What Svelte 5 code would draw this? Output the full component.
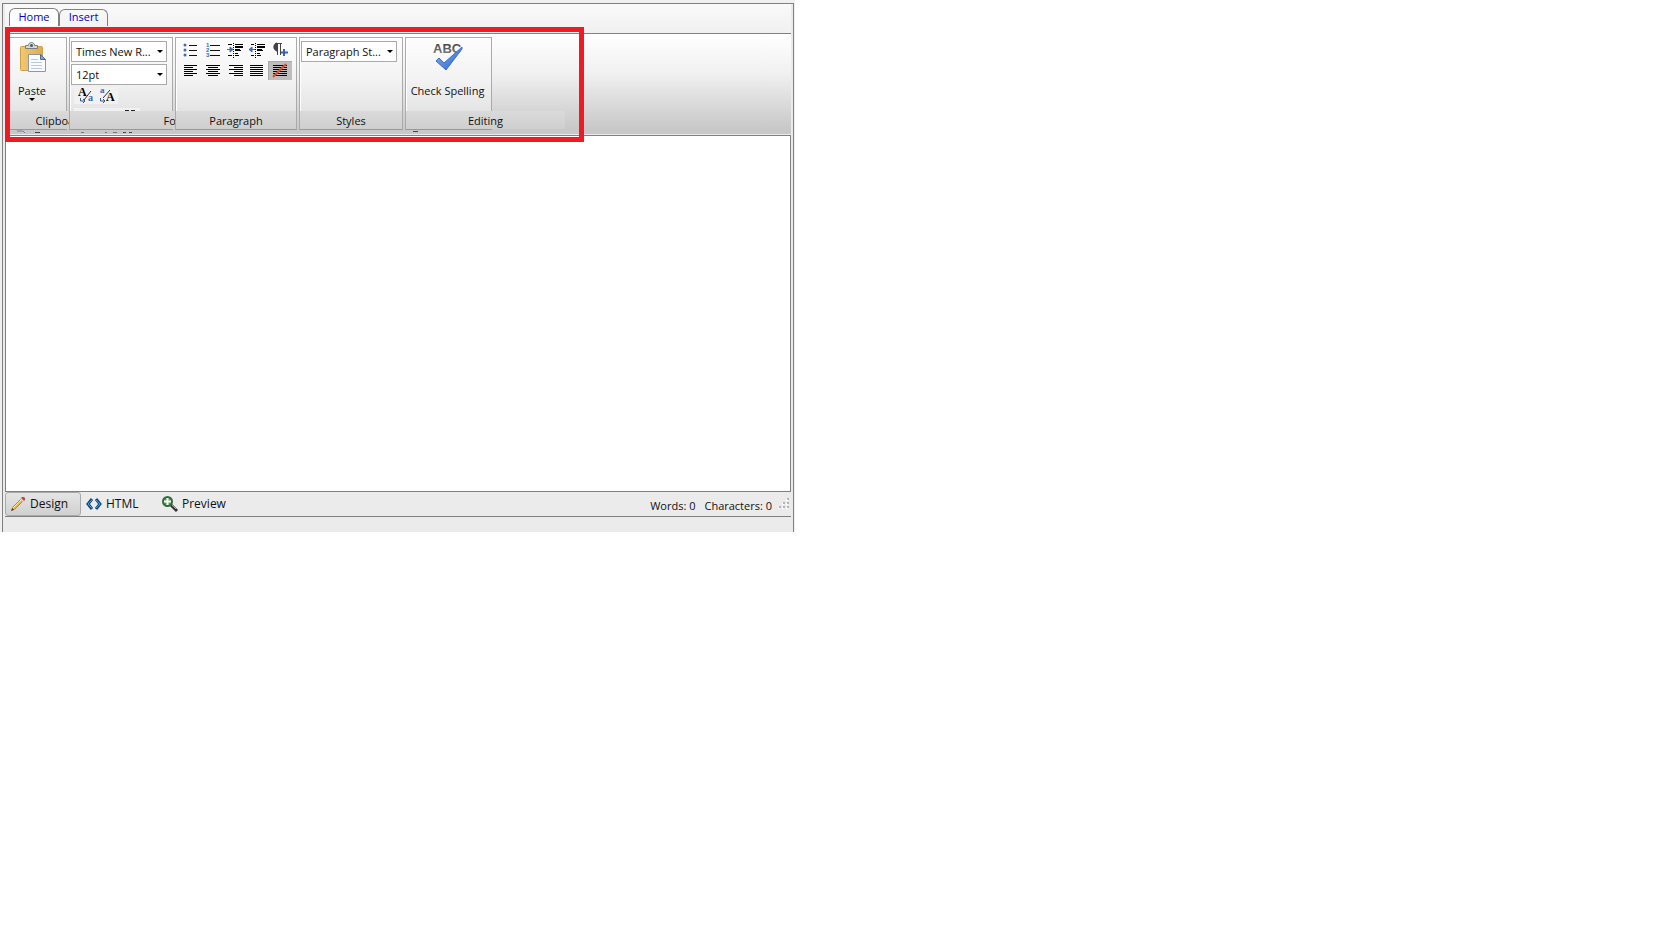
<script>
  let mode = $state('Design');
  let content = $state('');
  const words = $derived(content.trim() ? content.trim().split(/\s+/).length : 0);
  const aligns = [
    ['Align left', [[1, 13], [1, 9], [1, 13], [1, 9], [1, 13], [1, 9]]],
    ['Align center', [[1, 14], [3, 10], [1, 14], [3, 10], [1, 14], [3, 10]]],
    ['Align right', [[2, 14], [7, 9], [2, 14], [7, 9], [2, 14], [7, 9]]],
    ['Justify', [[1, 13], [1, 13], [1, 13], [1, 13], [1, 13], [1, 13]]],
  ];
</script>

<div class="frame">
  <main class="editor">
    <nav class="tabs">
      <a class="tab active" href="#home">Home</a>
      <a class="tab" href="#insert">Insert</a>
    </nav>

    <div class="ribbon">
      <section class="group clipboard">
        <div class="body">
          <button class="big paste">
            <svg width="28" height="32" viewBox="0 0 28 32">
              <defs><linearGradient id="board" x1="0" x2="1"><stop stop-color="#f3c870" /><stop offset="1" stop-color="#dfab4c" /></linearGradient></defs>
              <rect x="2.500" y="5.500" width="22" height="24" rx="1" fill="url(#board)" stroke="#cda04a" />
              <path d="M7.500 4.500h3c0-4 6-4 6 0h3v3h-12z" fill="#d5d8da" stroke="#777f84" />
              <circle cx="13.500" cy="4.500" r="1.500" fill="#555" />
              <path d="M10.500 13.500h12l5 5v12h-17z" fill="#f8fbff" stroke="#8798b5" />
              <path d="M22.500 13.500v5h5z" fill="#8fa2c0" stroke="#53698f" />
              <path d="M13 18.500h7M13 21.500h11M13 24.500h11M13 27.500h11" stroke="#b9c9e2" />
            </svg>
            <span>Paste</span>
            <i class="arrow"></i>
          </button>
        </div>
        <h2>Clipboard</h2>
      </section>

      <section class="group font">
        <div class="body">
          <select aria-label="Font family"><option>Times New R...</option></select>
          <select aria-label="Font size"><option>12pt</option></select>
          <div class="case">
            <button aria-label="Lowercase">
              <svg width="16" height="17" viewBox="0 0 16 17">
                <text x="0" y="9" class="letter" font-size="12">A</text><text x="10" y="14" class="letter small" font-size="10">a</text>
                <path d="M6 13L13 4" stroke="#333" /><path d="M2.500 11v3h4M5 12l2 2-2 2" fill="none" stroke="#36598f" />
              </svg>
            </button>
            <button aria-label="Uppercase">
              <svg width="16" height="17" viewBox="0 0 16 17">
                <text x="0" y="6" class="letter small" font-size="9">a</text><text x="6" y="14" class="letter" font-size="12">A</text>
                <path d="M3 11L10 3" stroke="#333" /><path d="M.500 11v3h4M3 12l2 2-2 2" fill="none" stroke="#36598f" />
              </svg>
            </button>
          </div>
          <div class="cutrow"></div>
        </div>
        <h2>Font</h2>
      </section>

      <section class="group paragraph">
        <div class="body tools">
          <button aria-label="Bullets">
            <svg width="16" height="16"><path d="M6 3.500h8M6 8.500h8M6 13.500h8" stroke="#111" /><g fill="#456ab0"><circle cx="2" cy="3" r="1.500" /><circle cx="2" cy="8" r="1.500" /><circle cx="2" cy="13" r="1.500" /></g></svg>
          </button>
          <button aria-label="Numbering">
            <svg width="16" height="16"><path d="M5 3.500h10M5 8.500h10M5 13.500h10" stroke="#111" /><g class="num"><text x="1" y="5">1</text><text x="1" y="10">2</text><text x="1" y="15">3</text></g></svg>
          </button>
          <button aria-label="Indent">
            <svg width="16" height="16"><path d="M1 2.500h4M8 2.500h8M8 5.500h8M8 8.500h6M8 11.500h3M1 13.500h4M8 13.500h4" stroke="#000" /><path d="M8 5h8M8 8h5" stroke="#000" stroke-width="2" /><path d="M6.500 1v15" stroke="#000" stroke-dasharray="1 1" /><path d="M0 7.500h3M3 5l3 2.500L3 10z" stroke="#456ab0" fill="#456ab0" /></svg>
          </button>
          <button aria-label="Outdent">
            <svg width="16" height="16"><path d="M2 2.500h3M8 2.500h8M8 5.500h8M8 8.500h6M8 11.500h3M2 13.500h3M8 13.500h4" stroke="#000" /><path d="M8 5h8M8 8h5" stroke="#000" stroke-width="2" /><path d="M6.500 1v15" stroke="#000" stroke-dasharray="1 1" /><path d="M3 7.500h3M3 5L0 7.500 3 10z" stroke="#456ab0" fill="#456ab0" /></svg>
          </button>
          <button aria-label="New paragraph">
            <svg width="16" height="16"><path d="M4 2a3.500 3.500 0 000 6z" fill="#444" stroke="#444" stroke-width="2" /><path d="M3 1.500h7M5.500 2v11M8.500 2v11" stroke="#444" /><path d="M12 7v7M9 10.500h7" stroke="#3565b5" stroke-width="2" /></svg>
          </button>
          {#each aligns as [name, rows]}
            <button aria-label={name}>
              <svg width="16" height="14">
                {#each rows as [x, w], i}<rect {x} y={1 + i * 2} width={w} height="1" />{/each}
              </svg>
            </button>
          {/each}
          <button class="pressed" aria-label="No alignment">
            <svg width="16" height="14"><path d="M1 1.500h14M1 3.500h14M1 5.500h14M1 7.500h14M1 9.500h14M1 11.500h14" stroke="#000" /><path d="M1 13L14 0" stroke="#d9512f" stroke-width="2" /></svg>
          </button>
        </div>
        <h2>Paragraph</h2>
      </section>

      <section class="group styles">
        <div class="body">
          <select aria-label="Paragraph style"><option>Paragraph St...</option></select>
        </div>
        <h2>Styles</h2>
      </section>

      <section class="group editing">
        <div class="body">
          <button class="big check">
            <svg width="32" height="32" viewBox="0 0 32 32">
              <defs>
                <linearGradient id="abc" x2="0" y2="1"><stop stop-color="#333" /><stop offset="1" stop-color="#888" /></linearGradient>
                <linearGradient id="tick" x2="1" y2="1"><stop stop-color="#8bb7f4" /><stop offset="1" stop-color="#2260d4" /></linearGradient>
              </defs>
              <text x="1" y="12" class="abc" fill="url(#abc)">ABC</text>
              <path d="M4 20l3-3 5 5L30 6v2L14 29z" fill="url(#tick)" stroke="#3e6fc6" />
            </svg>
            <span>Check Spelling</span>
          </button>
        </div>
        <h2>Editing</h2>
      </section>

      <svg class="remnants" width="440" height="4" aria-hidden="true">
        <path d="M9 1h6l2 2" stroke="#71839d" fill="none" /><path d="M27 2.500h5M115 2.500h3M121 2.500h3M405 1.500h5" stroke="#444" />
        <path d="M73 2.500h3M97 2.500h2M105 2.500h4" stroke="#777" />
      </svg>
    </div>

    <textarea aria-label="Document" bind:value={content}></textarea>

    <footer>
      <button class="mode" class:on={mode === 'Design'} onclick={() => (mode = 'Design')}>
        <svg width="16" height="16"><path d="M2 14l1-3 8-8 2 2-8 8z" fill="#efb83f" stroke="#b98535" /><path d="M3 12l8-8" stroke="#ffe79a" /><path d="M10 3l1-1 3 3-1 1z" fill="#d9dbe5" /><path d="M11 2l1-1h2l1 1v2l-1 1z" fill="#c84545" /><path d="M1 15l1-3 2 2z" fill="#553e2c" /></svg>
        Design
      </button>
      <button class="mode html" class:on={mode === 'HTML'} onclick={() => (mode = 'HTML')}>
        <svg width="16" height="16"><path d="M6 3L2 8l4 5M10 3l4 5-4 5" fill="none" stroke="#174d7c" stroke-width="3" /><path d="M6 4L2 8l4 4M10 4l4 4-4 4" fill="none" stroke="#4d9ace" /></svg>
        HTML
      </button>
      <button class="mode preview" class:on={mode === 'Preview'} onclick={() => (mode = 'Preview')}>
        <svg width="16" height="16"><path d="M8 8l7 7" stroke="#333" stroke-width="3" /><path d="M9 8l5 5" stroke="#aaa" /><circle cx="5.500" cy="5.500" r="4.500" fill="#4a9e4c" stroke="#346b39" stroke-width="2" /><path d="M5.500 2v7M2 5.500h7" stroke="#fff" stroke-width="2" /></svg>
        Preview
      </button>
      <span class="count">Words: {words}</span>
      <span class="count">Characters: {content.length}</span>
      <svg class="grip" width="12" height="12">
        <path d="M8 1h2v2H8zM4 5h2v2H4zM8 5h2v2H8zM0 9h2v2H0zM4 9h2v2H4zM8 9h2v2H8z" fill="#fff" />
        <path d="M9 0h2v2H9zM5 4h2v2H5zM9 4h2v2H9zM1 8h2v2H1zM5 8h2v2H5zM9 8h2v2H9z" fill="#b4b4b4" />
      </svg>
    </footer>
    <div class="highlight"></div>
  </main>
</div>

<style>
  :global(body) { margin: 0; background: #fff; }
  .frame { max-width: 795px; box-sizing: border-box; padding: 3px 1px 0 2px; background: #f0f0f0; font: 11px/16px "Open Sans", "Noto Sans", sans-serif; color: #111; }
  .editor { position: relative; border: 1px solid #808080; border-bottom: 0; padding: 0 2px 15px; background: #ebebeb; }
  button, select { font: inherit; color: inherit; }
  button { border: 0; background: none; padding: 0; }
  svg { display: block; flex: none; overflow: visible; }

  .tabs { display: flex; align-items: flex-start; height: 29px; box-sizing: border-box; padding: 4px 4px 0; background: linear-gradient(#fafafa, #f0f0f0); }
  .tab { box-sizing: border-box; height: 17px; min-width: 49px; margin-top: 1px; padding: 0 8px; border: 1px solid #808080; border-bottom: 0; border-radius: 6px 6px 0 0; color: #00c; text-decoration: none; text-align: center; line-height: 14px; }
  .tab.active { height: 18px; min-width: 50px; margin-top: 0; background: #fff; line-height: 16px; }

  .ribbon { position: relative; display: flex; gap: 2px; height: 101px; box-sizing: border-box; padding: 3px 3px 0; border-top: 1px solid #808080; background: linear-gradient(#fff, #f0f0f0 40%, #c8c8c8 95%); overflow: hidden; }
  .group { position: relative; flex: none; display: flex; flex-direction: column; box-sizing: border-box; height: 93px; border: 1px solid #aaa; border-bottom-color: #999; box-shadow: inset 1px 1px #fff; background: linear-gradient(#fdfdfd, #f3f3f3 45%, #dcdcdc); }
  .body { flex: 1; min-height: 0; padding: 3px 1px 0; }
  h2 { height: 18px; margin: 0; font: inherit; line-height: 20px; text-align: center; background: linear-gradient(#dadada, #cfcfcf); }
  .clipboard { width: 59px; }
  .clipboard h2 { width: 103px; }
  .font { width: 104px; }
  .font h2 { width: 210px; }
  .paragraph { width: 122px; }
  .styles { width: 104px; }
  .editing { width: 87px; }
  .editing h2 { width: 159px; }

  .big { display: flex; flex-direction: column; align-items: center; width: 100%; white-space: nowrap; }
  .big span { margin-top: 10px; }
  .paste { width: 44px; }
  .check { width: 81px; }
  .arrow { margin-top: -1px; border: 3px solid transparent; border-top-color: #000; border-bottom: 0; }
  select { display: block; box-sizing: border-box; width: 96px; height: 21px; margin-bottom: 2px; padding: 0 0 0 4px; border: 1px solid #aaa; border-radius: 0; appearance: none; background: #fff url("data:image/svg+xml,%3Csvg xmlns='http://www.w3.org/2000/svg' width='6' height='3'%3E%3Cpath d='M0 0h6L3 3z'/%3E%3C/svg%3E") no-repeat right 3px center; }
  .case { display: flex; gap: 6px; width: 44px; box-sizing: border-box; margin-left: 3px; padding-left: 4px; background: #f1f1f1; }
  .cutrow { width: 66px; height: 3px; margin: 4px 0 0 3px; background: linear-gradient(90deg, transparent 51px, #222 51px 55px, transparent 55px 57px, #222 57px 61px, transparent 61px) 0 2px / 100% 1px no-repeat, #f1f1f1; }
  .letter { font-family: "Liberation Serif", serif; font-weight: bold; }
  .small { fill: #3d68b1; }
  .num { font: bold 6px "Liberation Sans", sans-serif; fill: #3d68b1; }
  .abc { font: bold 13px "Liberation Sans", sans-serif; }
  .tools { display: grid; grid-template-columns: 22px 22px 22px 22px 24px; grid-auto-rows: 19px; row-gap: 2px; align-content: start; padding: 2px 0 0 4px; }
  .tools button { display: grid; place-items: center; height: 19px; }
  .tools .pressed { background: #bdbdbd; box-shadow: inset 1px 1px #aaa; }
  .remnants { position: absolute; left: 3px; bottom: 0; }

  textarea { display: block; width: 100%; height: 357px; box-sizing: border-box; margin-top: 1px; padding: 4px; border: 1px solid #808080; border-radius: 0; resize: none; outline: 0; background: #fff; font: 16px "Liberation Serif", serif; }
  footer { display: flex; align-items: center; height: 24px; border-bottom: 1px solid #808080; font-size: 12px; }
  .mode { display: flex; align-items: center; gap: 4px; box-sizing: border-box; height: 24px; min-width: 76px; padding: 0 4px; border: 1px solid transparent; border-radius: 3px; }
  .on { border-color: #aaa; background: linear-gradient(#e5e5e5, #d0d0d0); }
  .preview { margin-right: auto; }
  .count { margin-right: 9px; padding-top: 3px; font-size: 11px; }
  .grip { margin-right: 1px; margin-left: -3px; }
  .highlight { position: absolute; left: 2px; top: 23px; width: 579px; height: 115px; max-width: 100%; box-sizing: border-box; border: 5px solid #ed1c24; pointer-events: none; }
</style>
